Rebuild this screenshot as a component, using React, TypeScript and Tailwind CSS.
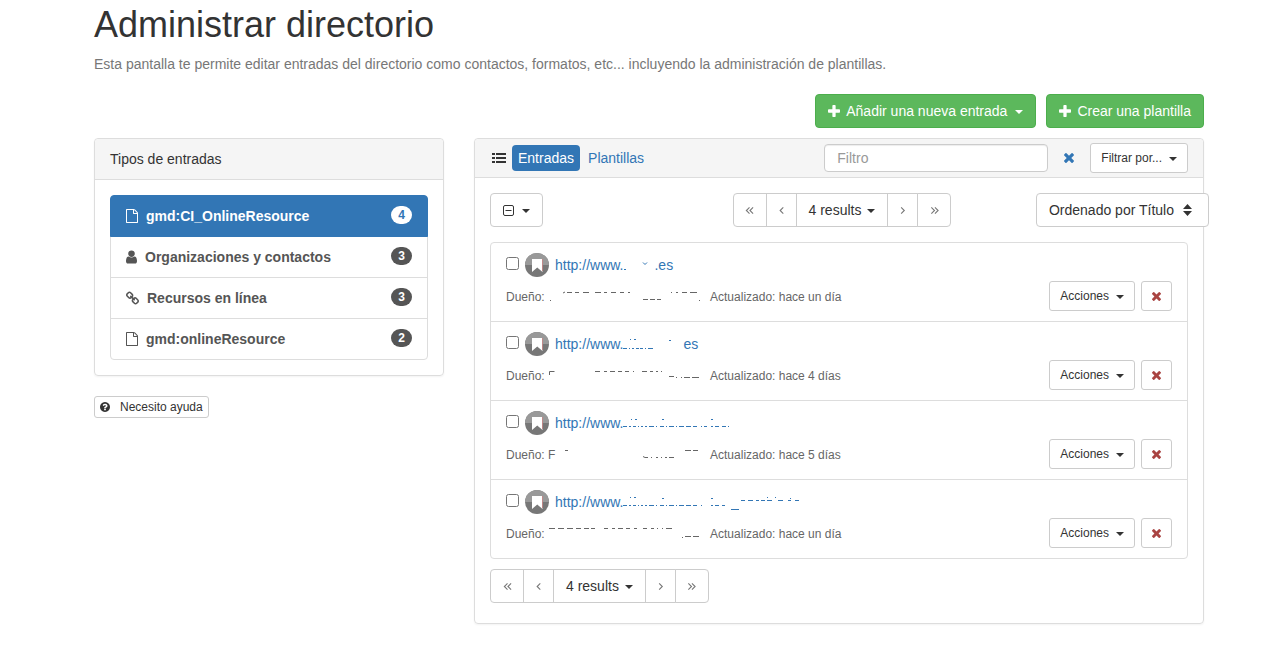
import React from "react";

const paths = {
  file: "M1468 380q28 28 48 76t20 88v1152q0 40-28 68t-68 28H96q-40 0-68-28t-28-68V96q0-40 28-68T96 0h896q40 0 88 20t76 48zm-444-244v376h376q-10-29-22-41l-313-313q-12-12-41-22zm384 1528V640H992q-40 0-68-28t-28-68V128H128v1536h1280z",
  user: "M1536 1399q0 109-62.5 187t-150.5 78H469q-88 0-150.5-78T256 1399q0-85 8.5-160.5t31.5-152 58.5-131 94-89T583 832q131 128 313 128t313-128q76 0 134.5 34.5t94 89 58.5 131 31.5 152 8.5 160.5zm-256-887q0 159-112.5 271.5T896 896 624.5 783.5 512 512t112.5-271.5T896 128t271.5 112.5T1280 512z",
  link: "M1520 1216q0-40-28-68l-208-208q-28-28-68-28-42 0-72 32 3 3 19 18.5t21.5 21.5 15 19 13 25.500 3.500 27.500q0 40-28 68t-68 28q-15 0-27.500-3.500t-25.500-13-19-15-21.500-21.500-18.500-19q-33 31-33 73 0 40 28 68l206 207q27 27 68 27 40 0 68-26l147-146q28-28 28-67zm-703-705q0-40-28-68L583 236q-28-28-68-28-39 0-68 27L300 381q-28 28-28 67 0 40 28 68l208 208q27 27 68 27 42 0 72-31-3-3-19-18.500t-21.500-21.500-15-19-13-25.500T576 627q0-40 28-68t68-28q15 0 27.500 3.500t25.500 13 19 15 21.500 21.500 18.500 19q33-31 33-73zm895 705q0 120-85 203l-147 146q-83 83-203 83-121 0-204-85l-206-207q-83-83-83-203 0-123 88-209l-88-88q-86 88-208 88-120 0-204-84L164 652q-84-84-84-204t85-203L312 99q83-83 203-83 121 0 204 85l206 207q83 83 83 203 0 123-88 209l88 88q86-88 208-88 120 0 204 84l208 208q84 84 84 204z",
  plus: "M1600 736v192q0 40-28 68t-68 28h-416v416q0 40-28 68t-68 28H800q-40 0-68-28t-28-68v-416H288q-40 0-68-28t-28-68V736q0-40 28-68t68-28h416V224q0-40 28-68t68-28h192q40 0 68 28t28 68v416h416q40 0 68 28t28 68z",
  times: "M1490 1322q0 40-28 68l-136 136q-28 28-68 28t-68-28l-294-294-294 294q-28 28-68 28t-68-28l-136-136q-28-28-28-68t28-68l294-294-294-294q-28-28-28-68t28-68l136-136q28-28 68-28t68 28l294 294 294-294q28-28 68-28t68 28l136 136q28 28 28 68t-28 68l-294 294 294 294q28 28 28 68z",
  help: "M1024 1376v-192q0-14-9-23t-23-9H800q-14 0-23 9t-9 23v192q0 14 9 23t23 9h192q14 0 23-9t9-23zm256-672q0-88-55.5-163T1086 425t-170-41q-243 0-371 213-15 24 8 42l132 100q7 6 19 6 16 0 25-12 53-68 86-92 34-24 86-24 48 0 85.500 26t37.500 59q0 38-20 61t-68 45q-63 28-115.500 86.500T768 1020v36q0 14 9 23t23 9h192q14 0 23-9t9-23q0-19 21.500-49.500T1100 957q32-18 49-28.500t46-35 44.500-48 28-60.500 12.500-81zm384 192q0 209-103 385.500T1281.500 1561 896 1664t-385.500-103T231 1281.500 128 896t103-385.500T510.500 231 896 128t385.500 103T1561 510.500 1664 896z",
};

const types = [
  { label: "gmd:CI_OnlineResource", count: 4, icon: paths.file, box: "0 0 1536 1792", size: "w-3 h-3.5", active: true },
  { label: "Organizaciones y contactos", count: 3, icon: paths.user, box: "256 128 1280 1536", size: "w-[11px] h-3.5", active: false },
  { label: "Recursos en línea", count: 3, icon: paths.link, box: "80 16 1632 1632", size: "w-[13px] h-3.5", active: false },
  { label: "gmd:onlineResource", count: 2, icon: paths.file, box: "0 0 1536 1792", size: "w-3 h-3.5", active: false },
];

// urlMarks and ownerMarks are what is left of the erased part of each text
const entries = [
  {
    urlMarks: "M1 9.5h2M20 2.5l2 2 2-2",
    urlWidth: 31,
    urlEnd: ".es",
    owner: "",
    ownerMarks: "M2 11.5h1M15 4l2-1M19 3.5h5M27 3.5h4M35 3.5h6M47 3.5h6M56 3.5h3M63 3.5h5M72 3.5h4M80 3.5h2M95 10.5h5M102 10.5h5M109 10.5h4M123 3.5h1M128 3.5h2M134 3.5h5M142 3.5h7M151 11.5h1",
    updated: "hace un día",
  },
  {
    urlMarks: "M0 9.5h4M6 9.5h1M9 9.5h2M13 9.5h3M17 9.5h3M22 9.5h1M25 9.5h5M7 .5h1M11 .5h2M46 1.5h2",
    urlWidth: 60,
    urlEnd: "es",
    owner: "",
    ownerMarks: "M1.5 7v-3.5h5M47 3.5h5M56 3.5h3M62 3.5h5M70 3.5h4M77 3.5h4M85 3.5h1M94 3.5h5M102 3.5h3M108 3.5h2M113 3.5h1M121 8.5h5M128 9.5h1M133 9.5h1M136 9.5h6M144 9.5h7",
    updated: "hace 4 días",
  },
  {
    urlMarks: "M0 8.5h4M6 8.5h2M10 8.5h3M15 8.5h1M18 8.5h2M22 8.5h2M26 8.5h5M33 8.5h1M37 8.5h4M43 8.5h1M46 8.5h5M53 8.5h1M56 8.5h5M63 8.5h5M70 8.5h4M78 8.5h1M81 8.5h3M88 8.5h2M92 8.5h4M99 8.5h4M105 8.5h1M8 1.5h1M12 1.5h2M39 1.5h2M88 1.5h2",
    urlWidth: 108,
    urlEnd: "",
    owner: "F",
    ownerMarks: "M17 3.5h3M95 9.5l2 1h3M103 10.5h1M108 10.5h2M113 10.5h1M117 10.5h2M121 10.5h5M137 3.5h6M145 3.5h5",
    updated: "hace 5 días",
  },
  {
    urlMarks: "M0 8.5h4M6 8.5h2M10 8.5h3M15 8.5h1M18 8.5h2M22 8.5h2M26 8.5h5M33 8.5h1M37 8.5h4M43 8.5h1M46 8.5h5M53 8.5h1M56 8.5h5M63 8.5h5M70 8.5h4M78 8.5h1M88 8.5h2M92 8.5h4M99 8.5h3M7 .5h1M11 .5h2M39 1.5h2M88 1.5h2M108 12.5h8M118 3.5h4M125 3.5h5M133 3.5h3M138 3.5h4M144 3.5h5M144 .5h1M152 .5h1M155 3.5h5M165 3.5h3M167 1.5h1M172 3.5h4",
    urlWidth: 176,
    urlEnd: "",
    owner: "",
    ownerMarks: "M1 2.5h6M10 2.5h6M19 2.5h6M28 2.5h5M36 2.5h5M43 2.5h4M56 2.5h4M64 2.5h3M70 2.5h5M78 2.5h4M86 2.5h3M95 2.5h4M103 2.5h3M109 2.5h1M114 2.5h1M118 2.5h6M134 11.5h1M137 10.5h6M145 10.5h6",
    updated: "hace un día",
  },
];

const Icon: React.FC<{ d: string; box: string; className: string }> = ({ d, box, className }) => (
  <svg viewBox={box} className={`shrink-0 ${className}`} fill="currentColor" aria-hidden="true">
    <path d={d} />
  </svg>
);

const Caret: React.FC<{ className?: string }> = ({ className = "" }) => (
  <span className={`inline-block shrink-0 mt-0.5 border-t-4 border-x-4 border-x-transparent ${className}`} />
);

const Angle: React.FC<{ d: string }> = ({ d }) => (
  <svg viewBox="0 0 10 10" className="w-[9px] h-[9px]" fill="none" stroke="currentColor" strokeWidth="1.2" aria-hidden="true">
    <path d={d} />
  </svg>
);

const Pager: React.FC = () => {
  const button = "flex items-center justify-center border border-[#ccc] bg-white text-[#777]";
  return (
    <div className="flex h-[34px]">
      <button aria-label="Primera página" className={`${button} w-[34px] rounded-l`}>
        <Angle d="M5 1.5L1.5 5 5 8.5M9 1.5L5.5 5 9 8.5" />
      </button>
      <button aria-label="Anterior" className={`${button} w-[31px] -ml-px`}>
        <Angle d="M7 1.5L3.5 5 7 8.5" />
      </button>
      <button className="flex items-center gap-1.5 -ml-px px-3 border border-[#ccc] bg-white">
        4 results
        <Caret />
      </button>
      <button aria-label="Siguiente" className={`${button} w-[31px] -ml-px`}>
        <Angle d="M3.5 1.5L7 5 3.5 8.5" />
      </button>
      <button aria-label="Última página" className={`${button} w-[34px] -ml-px rounded-r`}>
        <Angle d="M1.5 1.5L5 5 1.5 8.5M5.5 1.5L9 5 5.5 8.5" />
      </button>
    </div>
  );
};

const App: React.FC = () => {
  return (
    <div className="min-h-screen bg-white pl-3 font-['Liberation_Sans',Arial,sans-serif] text-sm leading-5 text-[#333]">
      <main className="max-w-[1110px] mx-auto pt-[5px] pb-7">
        <h1 className="text-4xl leading-10">Administrar directorio</h1>
        <p className="mt-[9px] text-[#777]">
          Esta pantalla te permite editar entradas del directorio como contactos, formatos, etc... incluyendo la
          administración de plantillas.
        </p>

        {/* Create buttons */}
        <div className="flex justify-end gap-2.5 mt-5 text-white">
          <button className="flex items-center gap-1.5 h-[34px] px-3 rounded border border-[#4cae4c] bg-[#5cb85c]">
            <Icon d={paths.plus} box="192 128 1408 1408" className="w-3 h-3" />
            Añadir una nueva entrada
            <Caret className="ml-0.5" />
          </button>
          <button className="flex items-center gap-1.5 h-[34px] px-3 rounded border border-[#4cae4c] bg-[#5cb85c]">
            <Icon d={paths.plus} box="192 128 1408 1408" className="w-3 h-3" />
            Crear una plantilla
          </button>
        </div>

        <div className="grid grid-cols-3 items-start gap-[30px] mt-2.5">
          {/* Entry types */}
          <aside>
            <section className="rounded border border-[#ddd] shadow-xs">
              <h2 className="px-[15px] py-2.5 rounded-t bg-[#f5f5f5] border-b border-[#ddd]">Tipos de entradas</h2>
              <ul className="p-[15px]">
                {types.map((type) => (
                  <li key={type.label} className="group -mt-px first:mt-0">
                    <a
                      href="#"
                      className={`flex items-center gap-2 px-[15px] py-2.5 border font-bold group-first:rounded-t group-last:rounded-b ${
                        type.active ? "relative bg-[#3276b5] border-[#3276b5] text-white" : "border-[#ddd] text-[#555]"
                      }`}
                    >
                      <Icon d={type.icon} box={type.box} className={type.size} />
                      <span>{type.label}</span>
                      <span
                        className={`ml-auto -mt-px mb-px px-[7px] rounded-full text-xs leading-[18px] ${
                          type.active ? "bg-white text-[#3276b5]" : "bg-[#555] text-white"
                        }`}
                      >
                        {type.count}
                      </span>
                    </a>
                  </li>
                ))}
              </ul>
            </section>
            <button className="flex items-center gap-2.5 h-[22px] mt-5 px-[5px] rounded-[3px] border border-[#ccc] text-xs">
              <Icon d={paths.help} box="128 128 1536 1536" className="w-2.5 h-2.5" />
              Necesito ayuda
            </button>
          </aside>

          {/* Entries */}
          <section className="col-span-2 rounded border border-[#ddd] shadow-xs">
            <header className="flex items-center h-[39px] px-[15px] rounded-t bg-[#f5f5f5] border-b border-[#ddd]">
              <svg viewBox="0 0 16 12" className="w-4 h-3 ml-0.5 mr-1" fill="currentColor" aria-hidden="true">
                <path d="M0 1h3v2H0zM0 5h3v2H0zM0 9h3v2H0zM4 1h10v2H4zM4 5h10v2H4zM4 9h10v2H4z" />
              </svg>
              <nav className="flex gap-0.5">
                <a href="#" className="px-1.5 py-[3px] rounded bg-[#3276b5] text-white">Entradas</a>
                <a href="#" className="px-1.5 py-[3px] text-[#3276b5]">Plantillas</a>
              </nav>
              <input
                type="text"
                aria-label="Filtro"
                placeholder="Filtro"
                className="w-56 h-7 ml-auto px-3 rounded border border-[#ccc] bg-white shadow-[inset_0_1px_1px_rgba(0,0,0,0.075)] placeholder:text-[#999]"
              />
              <button aria-label="Limpiar filtro" className="px-4 text-[#3276b5]">
                <Icon d={paths.times} box="302 366 1188 1188" className="w-2.5 h-2.5" />
              </button>
              <button className="flex items-center gap-[7px] h-[30px] px-2.5 rounded-[3px] border border-[#ccc] bg-white text-xs">
                Filtrar por...
                <Caret />
              </button>
            </header>

            <div className="px-[15px] pt-[15px] pb-5">
              <div className="grid grid-cols-3">
                <div>
                  <button
                    aria-label="Seleccionar"
                    className="flex items-center gap-2 h-[34px] px-3 rounded border border-[#ccc]"
                  >
                    <svg viewBox="0 0 11 11" className="w-[11px] h-[11px]" fill="none" stroke="currentColor" aria-hidden="true">
                      <rect x=".5" y=".5" width="10" height="10" rx="1.5" />
                      <path d="M2.5 5.5h6" />
                    </svg>
                    <Caret />
                  </button>
                </div>
                <div className="flex justify-center pl-1.5">
                  <Pager />
                </div>
                {/* the sort button runs over the panel's right edge */}
                <div className="flex justify-end -mr-[21px]">
                  <button className="flex items-center gap-2 h-[34px] px-3 rounded border border-[#ccc] bg-white">
                    Ordenado por Título
                    <svg viewBox="0 0 14 12" className="w-3.5 h-3" fill="currentColor" aria-hidden="true">
                      <path d="M5.500 0L10 5H1zM5.500 12L10 7H1z" />
                    </svg>
                  </button>
                </div>
              </div>

              <ul className="mt-[15px] rounded border border-[#ddd] divide-y divide-[#ddd]">
                {entries.map((entry, i) => (
                  <li key={i} className="px-[15px] py-2.5">
                    <div className="flex items-center h-6">
                      <input
                        type="checkbox"
                        aria-label={`Entrada ${i + 1}`}
                        className="w-[13px] h-[13px] mr-1.5 mb-1"
                      />
                      <svg viewBox="0 0 24 24" className="w-6 h-6 mr-1.5" aria-hidden="true">
                        <circle cx="12" cy="12" r="12" fill="#777" />
                        <path d="M0 12a12 12 0 0 1 24 0z" fill="#999" />
                        <path d="M7 6h10.500v13l-5.250-4.500L7 19z" fill="#fff" />
                        <path d="M17.500 6v12" stroke="#b77" strokeWidth=".8" />
                      </svg>
                      <a href="#" className="flex text-[#3276b5]">
                        http://www.
                        <svg width={entry.urlWidth} height="20" viewBox={`0 -5 ${entry.urlWidth} 20`} fill="none" stroke="currentColor" aria-hidden="true">
                          <path d={entry.urlMarks} />
                        </svg>
                        {entry.urlEnd}
                      </a>
                    </div>
                    <div className="flex items-center gap-1.5 mt-1 text-xs">
                      <span className="relative flex items-center pt-0.5 text-[#666]">
                        Dueño:&nbsp;
                        {entry.owner && <span className="absolute left-[42px]">{entry.owner}</span>}
                        <svg width="152" height="14" viewBox="0 1 152 14" fill="none" stroke="currentColor" aria-hidden="true">
                          <path d={entry.ownerMarks} />
                        </svg>
                      </span>
                      <span className="ml-1 mr-auto pt-0.5 text-[#666]">Actualizado: {entry.updated}</span>
                      <button className="flex items-center gap-[7px] h-[30px] px-2.5 rounded-[3px] border border-[#ccc]">
                        Acciones
                        <Caret />
                      </button>
                      <button
                        aria-label="Eliminar"
                        className="flex items-center justify-center w-[31px] h-[30px] rounded-[3px] border border-[#ccc] text-[#a94442]"
                      >
                        <Icon d={paths.times} box="302 366 1188 1188" className="w-[9px] h-[9px]" />
                      </button>
                    </div>
                  </li>
                ))}
              </ul>

              <div className="mt-2.5">
                <Pager />
              </div>
            </div>
          </section>
        </div>
      </main>
    </div>
  );
};

export default App;
